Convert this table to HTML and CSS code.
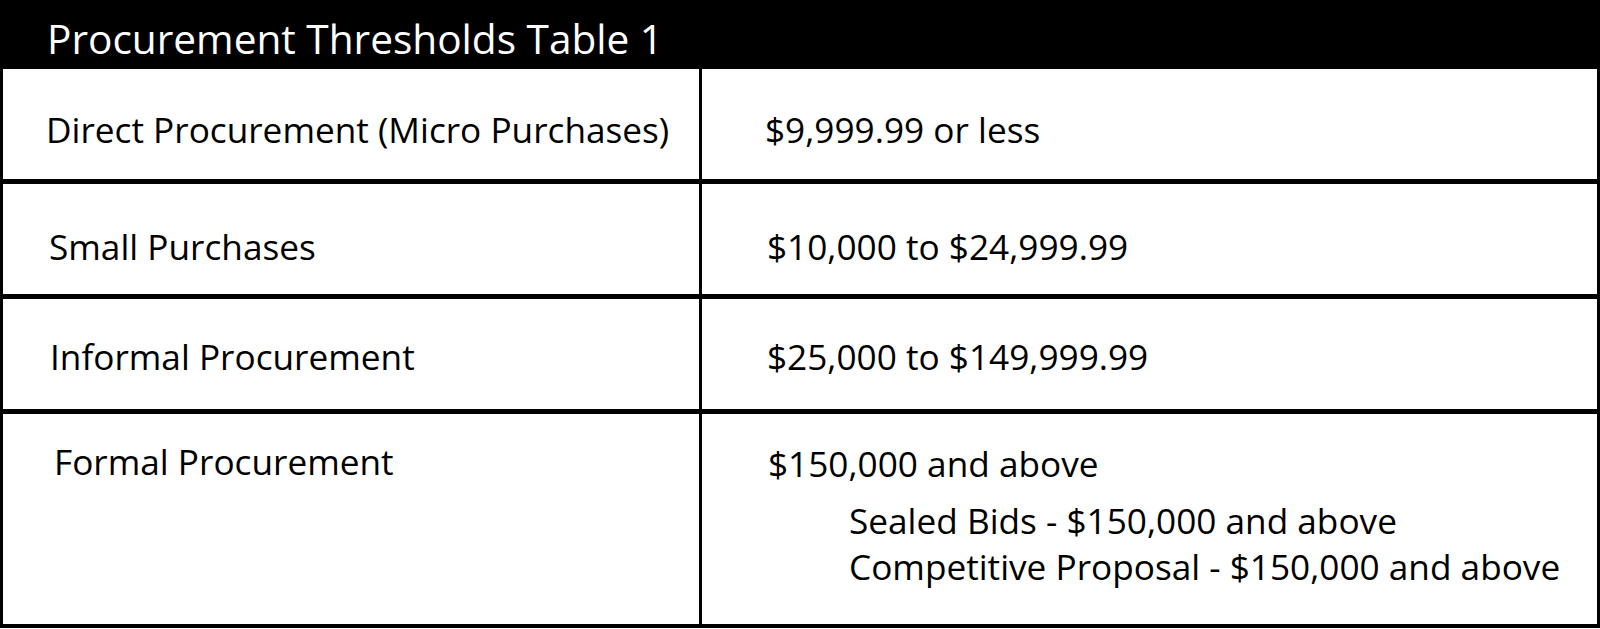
FILE: index.html
```html
<!DOCTYPE html>
<html lang="en">
<head>
<meta charset="utf-8">
<title>Procurement Thresholds Table 1</title>
<link rel="stylesheet" href="styles.css">
</head>
<body>
<div class="sheet">
  <div class="title">Procurement Thresholds Table 1</div>
  <div class="grid">
    <div class="row">
      <div class="cell label label-1">Direct Procurement (Micro Purchases)</div>
      <div class="cell value value-1">$9,999.99 or less</div>
    </div>
    <div class="row">
      <div class="cell label label-2 pad-2">Small Purchases</div>
      <div class="cell value pad-2">$10,000 to $24,999.99</div>
    </div>
    <div class="row">
      <div class="cell label label-3 pad-3">Informal Procurement</div>
      <div class="cell value pad-3">$25,000 to $149,999.99</div>
    </div>
    <div class="row row-tall">
      <div class="cell label label-4">Formal Procurement</div>
      <div class="cell value value-4">
        <div class="line">$150,000 and above</div>
        <div class="subs">
          <div class="line">Sealed Bids - $150,000 and above</div>
          <div class="line">Competitive Proposal - $150,000 and above</div>
        </div>
      </div>
    </div>
  </div>
</div>
</body>
</html>
```

FILE: styles.css
```css
html, body {
  margin: 0;
  padding: 0;
  background: #fff;
}

body {
  font-family: "Open Sans", "Noto Sans", "Liberation Sans", sans-serif;
  color: #000;
}

.sheet {
  width: 1600px;
}

.title {
  box-sizing: border-box;
  height: 69px;
  background: #000;
  color: #fff;
  font-size: 40.6px;
  line-height: 40px;
  padding: 19px 0 0 47px;
  white-space: nowrap;
}

.grid {
  border-left: 3px solid #000;
  border-right: 3px solid #000;
  border-bottom: 4px solid #000;
}

.row {
  display: grid;
  grid-template-columns: 699px 1fr;
  height: 110px;
}

.row + .row {
  border-top: 5px solid #000;
}

.row-tall {
  height: 210px;
}

.cell {
  box-sizing: border-box;
  font-size: 35.2px;
  line-height: 41px;
  padding-top: 40px;
  white-space: nowrap;
}

.pad-2 { padding-top: 42px; }
.pad-3 { padding-top: 37px; }

.label {
  border-right: 3px solid #000;
}

.label-1 { padding-left: 43px; }
.label-2 { padding-left: 46px; }
.label-3 { padding-left: 47px; }
.label-4 {
  padding-left: 51px;
  padding-top: 23px;
  line-height: 48px;
}

.value {
  padding-left: 65px;
}

.value-1 { padding-left: 63px; }

.value-4 {
  padding-left: 66px;
  padding-top: 25px;
  line-height: 48px;
}

.subs {
  margin-top: 10px;
  padding-left: 81px;
  line-height: 46px;
}
```
